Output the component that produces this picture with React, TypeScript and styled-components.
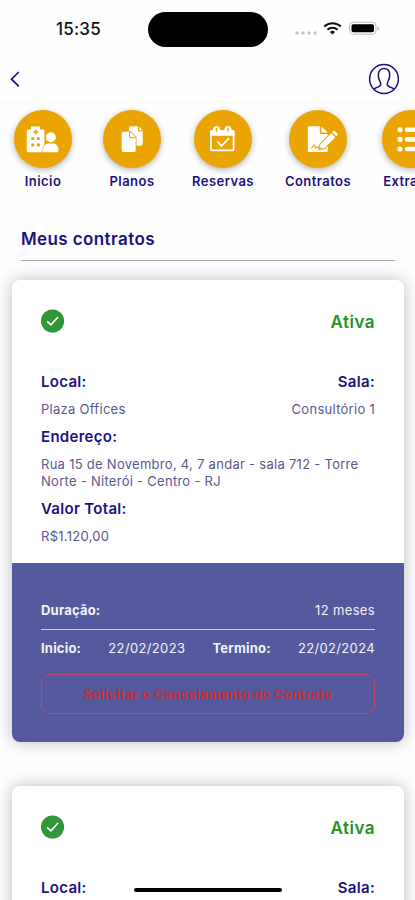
import React from "react";
import styled, { createGlobalStyle } from "styled-components";

const NAVY = "#1b1280";
const AMBER = "#eba502";
const INDIGO = "#545a9d";

const GlobalStyle = createGlobalStyle`
  *, *::before, *::after { box-sizing: border-box; }
  body { margin: 0; background: #fff; overflow: hidden; }
`;

const Screen = styled.div`
  position: relative;
  width: 415px;
  height: 900px;
  overflow: hidden;
  background: #fefefe;
  color: ${NAVY};
  font-family: Inter, "Liberation Sans", sans-serif;
`;

const StatusBar = styled.div`
  display: flex;
  align-items: center;
  height: 58px;
  padding: 0 34px 0 56px;
`;

const Clock = styled.div`
  width: 92px;
  color: #111;
  font-size: 17px;
  font-weight: 500;
  line-height: 20px;
  letter-spacing: 0.2px;
`;

const Island = styled.div`
  width: 120px;
  height: 35px;
  border-radius: 18px;
  background: #000;
`;

const StatusIcons = styled.svg`
  display: block;
  margin-left: auto;
`;

const TopBar = styled.header`
  display: flex;
  align-items: center;
  justify-content: space-between;
  height: 45px;
  padding: 0 15px 2px 9px;
  border-bottom: 1px solid #f8f8f8;
`;

const IconButton = styled.button`
  display: block;
  padding: 0;
  border: 0;
  background: none;
  color: ${NAVY};

  svg { display: block; }
`;

const Menu = styled.nav`
  display: flex;
  gap: 31px;
  padding: 7px 0 0 14px;
`;

const MenuItem = styled.div`
  display: flex;
  flex: none;
  flex-direction: column;
  align-items: center;
  min-width: 58px;
`;

const MenuCircle = styled.div`
  width: 58px;
  height: 58px;
  border-radius: 50%;
  background: ${AMBER};
  color: #fff;
  box-shadow: 0 2px 6px rgba(0, 0, 0, 0.3);

  svg { display: block; }
`;

const MenuLabel = styled.span`
  margin-top: 5px;
  font-size: 13px;
  font-weight: 600;
  line-height: 16px;
  letter-spacing: 0.45px;
  white-space: nowrap;
`;

const Heading = styled.h1`
  height: 42px;
  margin: 30px 20px 0 21px;
  padding-top: 10px;
  border-bottom: 1px solid #a5a4bd;
  font-size: 17px;
  font-weight: 600;
  line-height: 20px;
  letter-spacing: 0.4px;
`;

const List = styled.main`
  display: flex;
  flex-direction: column;
  gap: 44px;
  padding: 19px 11px 0 12px;
`;

const Card = styled.article`
  flex: none;
  height: 462px;
  border-radius: 8px;
  overflow: hidden;
  background: #fff;
  box-shadow: 0 0 16px rgba(0, 0, 0, 0.27);
`;

const CardBody = styled.div`
  height: 283px;
  padding: 28px 29px 0;
`;

const Row = styled.div<{ $gap?: number }>`
  display: flex;
  align-items: center;
  justify-content: space-between;
  margin-bottom: ${({ $gap = 0 }) => $gap}px;
`;

const Status = styled.span`
  padding-top: 2px;
  color: #219422;
  font-size: 17px;
  font-weight: 600;
  line-height: 24px;
  letter-spacing: 0.5px;
`;

const Label = styled.div`
  font-size: 15px;
  font-weight: 600;
  line-height: 20px;
  letter-spacing: 0.3px;
`;

const Value = styled.div`
  margin: 9px 0;
  color: #5c5791;
  font-size: 13px;
  font-weight: 400;
  line-height: 17px;
  letter-spacing: 0.28px;
`;

const Period = styled.div`
  height: 179px;
  padding: 38px 29px 0;
  background: ${INDIGO};
  color: #f3f3fb;
`;

const Duration = styled(Row)`
  height: 29px;
  padding-bottom: 10px;
  border-bottom: 1px solid #d3d4e8;
`;

const Dates = styled(Row)`
  height: 37px;
  padding-bottom: 2px;
`;

const Term = styled.span`
  font-size: 13px;
  font-weight: 700;
  line-height: 18px;
  letter-spacing: 0.2px;
`;

const Data = styled.span`
  font-size: 13px;
  line-height: 18px;
  letter-spacing: 0.35px;
`;

const CancelButton = styled.button`
  display: block;
  width: 100%;
  height: 40px;
  margin-top: 7px;
  padding: 0;
  border: 1px solid #b9496f;
  border-radius: 9px;
  background: none;
  color: #c0303f;
  font: 700 13px/18px Inter, "Liberation Sans", sans-serif;
  letter-spacing: 0.35px;
`;

const HomeIndicator = styled.div`
  position: absolute;
  left: 134px;
  bottom: 8px;
  width: 148px;
  height: 4px;
  border-radius: 2px;
  background: #000;
`;

const OfficeIcon = () => (
  <svg width="58" height="58" viewBox="0 0 58 58" fill="currentColor">
    <path d="M17 16.5h9v3h3a1.4 1.4 0 0 1 1.4 1.4v21.3H12.8V20.900a1.400 1.400 0 0 1 1.400-1.400H17z" />
    <g fill={AMBER}>
      <path d="M20.900 19.800h1.600v1.500H24v1.600h-1.500v1.500h-1.600v-1.500h-1.500v-1.600h1.500z" />
      <rect x="17.300" y="27.200" width="2.800" height="2.800" rx=".6" />
      <rect x="23" y="27.200" width="2.800" height="2.800" rx=".6" />
      <rect x="17.300" y="33.600" width="2.800" height="2.800" rx=".6" />
      <rect x="23" y="33.600" width="2.800" height="2.800" rx=".6" />
    </g>
    <g stroke={AMBER} strokeWidth="1.500" paintOrder="stroke">
      <path d="M29.200 42.200v-2.400c0-3.500 2.400-6.200 5.600-6.200h4c3.200 0 5.600 2.700 5.600 6.200v1.200a1.200 1.200 0 0 1-1.200 1.200z" />
      <circle cx="36.800" cy="27.200" r="5" />
    </g>
  </svg>
);

const FilesIcon = () => (
  <svg width="58" height="58" viewBox="0 0 58 58" fill="currentColor">
    <path d="M28 16.300h7v4.200a1 1 0 0 0 1 1h3.700v12.300a2 2 0 0 1-2 2H28a2 2 0 0 1-2-2V18.300a2 2 0 0 1 2-2z" />
    <path d="M36.200 16.500l3.400 3.700h-3.400z" />
    <path
      d="M20.700 21.800h6.300l5.700 5.800v13.600a2 2 0 0 1-2 2h-10a2 2 0 0 1-2-2v-17.400a2 2 0 0 1 2-2z"
      stroke={AMBER}
      strokeWidth="1.600"
      paintOrder="stroke"
      transform="translate(0 1) scale(1 .95)"
    />
    <path d="M26.500 22v4.300a1.500 1.500 0 0 0 1.500 1.500h4.500" fill="none" stroke={AMBER} strokeWidth="1.100" />
  </svg>
);

const CalendarIcon = () => (
  <svg width="58" height="58" viewBox="0 0 58 58" fill="none" stroke="currentColor">
    <rect x="17" y="21" width="22.600" height="19.400" rx="1" strokeWidth="1.800" />
    <path d="M16.200 20.800h24.200v5H16.200z" fill="currentColor" stroke="none" />
    <circle cx="22.500" cy="19.500" r="3.500" fill="currentColor" stroke="none" />
    <circle cx="34" cy="19.500" r="3.500" fill="currentColor" stroke="none" />
    <path d="M22.500 18v3.500M34 18v3.500" stroke={AMBER} strokeWidth="1.400" />
    <path d="M23.300 31.500l4.200 4.400 7.600-7.700" strokeWidth="1.800" />
  </svg>
);

const ContractIcon = () => (
  <svg width="58" height="58" viewBox="0 0 58 58" fill="currentColor">
    <path d="M20.200 16.300h10.600v6.500a1.200 1.200 0 0 0 1.200 1.200h6.800v16.700a1.400 1.400 0 0 1-1.400 1.400H20.200a1.400 1.400 0 0 1-1.400-1.400v-23a1.400 1.400 0 0 1 1.400-1.400z" />
    <path d="M32.400 16.600l6.200 6h-6.200z" />
    <path d="M31.500 34.200 42.400 23.200l4 4-10.900 11-5 .9z" stroke={AMBER} strokeWidth="2" paintOrder="stroke" />
    <path d="M43.300 22.300l1-1a1.200 1.200 0 0 1 1.700 0l2.300 2.300a1.200 1.200 0 0 1 0 1.700l-1 1z" />
    <path d="M22.200 38.200c1.400 0 2-3.400 3-3.400.8 0 .6 3.200 1.600 3.200s.8-1.200 1.600-1.200 1 1.400 2.200 1.400h2.600" fill="none" stroke={AMBER} strokeWidth="1.200" />
  </svg>
);

const ListIcon = () => (
  <svg width="58" height="58" viewBox="0 0 58 58" fill="currentColor">
    {[19.8, 29.4, 39].map((y) => (
      <g key={y}>
        <circle cx="18" cy={y} r="2.600" />
        <rect x="23" y={y - 2.3} width="20" height="4.600" rx="1.800" />
      </g>
    ))}
  </svg>
);

const BackIcon = () => (
  <svg width="12" height="18" viewBox="0 0 12 18" fill="none" stroke="currentColor" strokeWidth="1.700">
    <path d="M9.800 2 2.500 9.200l7.300 7.200" />
  </svg>
);

const ProfileIcon = () => (
  <svg width="32" height="32" viewBox="0 0 32 32" fill="none" stroke="currentColor" strokeWidth="1.500">
    <circle cx="16" cy="16" r="14.400" />
    <path d="M5.700 26.200c1.500-1.500 4.300-1.900 6-3.100 1.500-1.100 1.200-2.900.3-4.600-1-1.800-1.700-3.800-1.700-6.500 0-4.100 2.300-6.500 5.700-6.500s5.700 2.400 5.700 6.500c0 2.700-.7 4.700-1.700 6.500-.9 1.700-1.200 3.500.3 4.600 1.700 1.200 4.500 1.600 6 3.100" />
  </svg>
);

const CheckIcon = () => (
  <svg width="24" height="24" viewBox="0 0 24 24">
    <circle cx="11.500" cy="12" r="11.600" fill="#319637" />
    <path d="M6.200 12.300l3.700 3.500 7.200-7.800" fill="none" stroke="#fff" strokeWidth="1.700" />
  </svg>
);

const menu = [
  { label: "Inicio", Icon: OfficeIcon },
  { label: "Planos", Icon: FilesIcon },
  { label: "Reservas", Icon: CalendarIcon },
  { label: "Contratos", Icon: ContractIcon },
  { label: "Extratos", Icon: ListIcon },
];

const contracts = [1, 2].map((id) => ({
  id,
  status: "Ativa",
  place: "Plaza Offices",
  room: "Consultório 1",
  address: "Rua 15 de Novembro, 4, 7 andar - sala 712 - Torre Norte - Niterói - Centro - RJ",
  total: "R$1.120,00",
  duration: "12 meses",
  start: "22/02/2023",
  end: "22/02/2024",
}));

type Contract = (typeof contracts)[number];

const ContractCard = ({ contract }: { contract: Contract }) => (
  <Card>
    <CardBody>
      <Row $gap={38}>
        <CheckIcon />
        <Status>{contract.status}</Status>
      </Row>
      <Row>
        <Label>Local:</Label>
        <Label>Sala:</Label>
      </Row>
      <Row>
        <Value>{contract.place}</Value>
        <Value>{contract.room}</Value>
      </Row>
      <Label>Endereço:</Label>
      <Value>{contract.address}</Value>
      <Label>Valor Total:</Label>
      <Value>{contract.total}</Value>
    </CardBody>
    <Period>
      <Duration>
        <Term>Duração:</Term>
        <Data>{contract.duration}</Data>
      </Duration>
      <Dates>
        <Term>Inicio:</Term>
        <Data>{contract.start}</Data>
        <Term>Termino:</Term>
        <Data>{contract.end}</Data>
      </Dates>
      <CancelButton>Solicitar o Cancelamento do Contrato</CancelButton>
    </Period>
  </Card>
);

export default function App() {
  return (
    <>
      <GlobalStyle />
      <Screen>
        <StatusBar>
          <Clock>15:35</Clock>
          <Island />
          <StatusIcons width="88" height="20" viewBox="0 0 88 20">
            <g fill="#c4c4c4">
              <circle cx="4" cy="14" r="1.700" />
              <circle cx="10" cy="14" r="1.700" />
              <circle cx="16" cy="14" r="1.700" />
              <circle cx="22" cy="14" r="1.700" />
            </g>
            <g fill="none" stroke="#111" strokeWidth="2.100">
              <path d="M31.200 7.400a12.300 12.300 0 0 1 16.600 0" />
              <path d="M34.400 10.700a7.600 7.600 0 0 1 10.200 0" />
            </g>
            <path d="M39.500 15.500 36.900 12.900a3.900 3.900 0 0 1 5.200 0z" fill="#111" />
            <rect x="56.500" y="3.200" width="26.500" height="12" rx="3.500" fill="#fff" stroke="#bdbdbd" />
            <rect x="58.500" y="5.200" width="22.500" height="8" rx="1.800" fill="#000" />
            <path d="M84.500 7.500v4c1.300-.4 1.800-1.200 1.800-2s-.5-1.600-1.800-2z" fill="#bdbdbd" />
          </StatusIcons>
        </StatusBar>
        <TopBar>
          <IconButton aria-label="Voltar">
            <BackIcon />
          </IconButton>
          <IconButton aria-label="Perfil">
            <ProfileIcon />
          </IconButton>
        </TopBar>
        <Menu>
          {menu.map(({ label, Icon }) => (
            <MenuItem key={label}>
              <MenuCircle>
                <Icon />
              </MenuCircle>
              <MenuLabel>{label}</MenuLabel>
            </MenuItem>
          ))}
        </Menu>
        <Heading>Meus contratos</Heading>
        <List>
          {contracts.map((contract) => (
            <ContractCard key={contract.id} contract={contract} />
          ))}
        </List>
        <HomeIndicator />
      </Screen>
    </>
  );
}
